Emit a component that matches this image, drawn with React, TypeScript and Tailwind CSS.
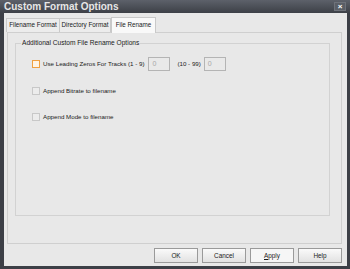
import React from "react";

const font = { fontFamily: '"Liberation Sans", Arial, sans-serif' };

function Check({ focus, label }: { focus?: boolean; label: string }) {
  return (
    <div className="flex items-center gap-[3px]">
      <div
        className={
          "w-[8px] h-[8px] border " +
          (focus ? "border-[#f0a040] bg-[#fff4e4]" : "border-[#c8c8c8] bg-[#ececec]")
        }
      />
      <span className="text-[6.2px] text-[#1a1a1a] leading-none">{label}</span>
    </div>
  );
}

function Field() {
  return (
    <div className="w-[22px] h-[14px] border border-[#b4b4b4] bg-[#e9e9e9] text-[7px] text-[#a8a8a8] pl-[3px] pt-[2px] leading-none">
      0
    </div>
  );
}

function Btn({ children, light }: { children: React.ReactNode; light?: boolean }) {
  return (
    <div
      className={
        "w-[44px] h-[15px] border border-[#9a9a9a] flex items-center justify-center text-[6.4px] text-[#1a1a1a] " +
        (light ? "bg-[#f6f6f6]" : "bg-gradient-to-b from-[#fafafa] to-[#e2e2e2]")
      }
    >
      {children}
    </div>
  );
}

export default function App() {
  return (
    <div style={font} className="w-[350px] h-[269px] bg-[#3c3f46] flex flex-col pl-[4px] pr-[3px] pb-[3px] overflow-hidden">
      <div className="h-[13px] -ml-[4px] -mr-[3px] bg-gradient-to-b from-[#5d616a] to-[#3d4047] flex items-center justify-between pl-[4px] pr-[4px]">
        <span className="text-[10px] font-bold text-[#e6e6e6] leading-none">Custom Format Options</span>
        <div className="w-[12px] h-[9px] bg-[#5a5e66] border border-[#6e727a] flex items-center justify-center text-[8px] text-white leading-none font-bold">
          ×
        </div>
      </div>
      <div className="flex-1 bg-[#e8e8e8] flex flex-col pl-[3px] pr-[5px] pt-[3px]">
        <div className="flex items-end h-[16px] -ml-[1px] relative z-10">
          <div className="w-[54px] h-[14px] border border-b-0 border-[#c9c9c9] bg-[#ececec] flex items-center justify-center text-[6.3px] text-[#1a1a1a] leading-none">
            Filename Format
          </div>
          <div className="w-[51px] h-[14px] border border-l-0 border-b-0 border-[#c9c9c9] bg-[#ececec] flex items-center justify-center text-[6.3px] text-[#1a1a1a] leading-none">
            Directory Format
          </div>
          <div className="w-[45px] h-[16px] -mb-[1px] border border-b-0 border-[#c9c9c9] bg-[#f9f9f9] flex items-center justify-center text-[6.3px] text-[#1a1a1a] leading-none">
            File Rename
          </div>
        </div>
        <div className="h-[212px] border border-[#cfcfcf] bg-[#e8e8e8] pt-[10px] px-[7px]">
          <div className="relative h-[173px] mr-[4px] border border-[#d2d2d2] pl-[16px] pt-[13px]">
            <span className="absolute -top-[4px] left-[5px] bg-[#e8e8e8] px-[1px] text-[6.6px] text-[#1a1a1a] leading-none">
              Additional Custom File Rename Options
            </span>
            <div className="flex items-center">
              <Check focus label="Use Leading Zeros For Tracks (1 - 9)" />
              <div className="ml-[4px]"><Field /></div>
              <span className="ml-[7px] text-[6.2px] text-[#1a1a1a] leading-none">(10 - 99)</span>
              <div className="ml-[3px]"><Field /></div>
            </div>
            <div className="mt-[16px]">
              <Check label="Append Bitrate to filename" />
            </div>
            <div className="mt-[18px]">
              <Check label="Append Mode to filename" />
            </div>
          </div>
        </div>
        <div className="flex justify-end gap-[4px] mt-[4px]">
          <Btn>OK</Btn>
          <Btn>Cancel</Btn>
          <Btn light>
            <span className="underline">A</span>pply
          </Btn>
          <Btn>Help</Btn>
        </div>
      </div>
    </div>
  );
}
